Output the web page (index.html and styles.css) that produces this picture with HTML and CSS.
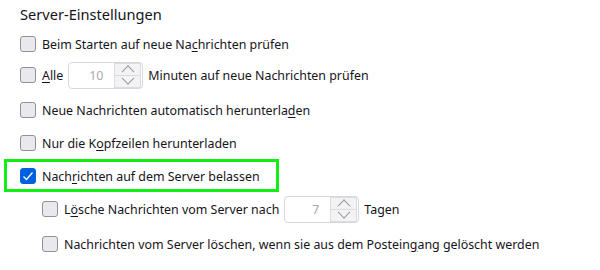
FILE: index.html
```html
<!DOCTYPE html>
<html lang="de">
<head>
    <meta charset="UTF-8">
    <title>Server-Einstellungen</title>
    <link rel="stylesheet" href="styles.css">
</head>
<body>
    <div class="settings">
        <h2>Server-Einstellungen</h2>
        <div class="rows">
            <label class="row">
                <span class="box"></span>
                <span>Beim Starten auf neue Na<u>c</u>hrichten prüfen</span>
            </label>
            <label class="row with-number">
                <span class="box"></span>
                <span><u>A</u>lle</span>
                <span class="number">
                    <span class="value">10</span>
                    <span class="spin">
                        <span class="up"></span>
                        <span class="down"></span>
                    </span>
                </span>
                <span>Minuten auf neue Nachrichten prüfen</span>
            </label>
            <label class="row">
                <span class="box"></span>
                <span>Neue Nachrichten automatisch herunterla<u>d</u>en</span>
            </label>
            <label class="row">
                <span class="box"></span>
                <span>Nur die K<u>o</u>pfzeilen herunterladen</span>
            </label>
            <label class="row focused">
                <span class="box checked">
                    <svg width="12" height="12" viewBox="0 0 12 12"><path d="M1.5 6.5 L4.5 9.5 L10.5 2.5" fill="none" stroke="#fff" stroke-width="1.3"/></svg>
                </span>
                <span>Nach<u>r</u>ichten auf dem Server belassen</span>
            </label>
            <label class="row sub">
                <span class="box"></span>
                <span>L<u>ö</u>sche Nachrichten vom Server nach</span>
                <span class="number">
                    <span class="value">7</span>
                    <span class="spin">
                        <span class="up"></span>
                        <span class="down"></span>
                    </span>
                </span>
                <span>Tagen</span>
            </label>
            <label class="row sub last">
                <span class="box"></span>
                <span>Nachrichten vom Server löschen, wenn sie aus dem Postein<u>g</u>ang gelöscht werden</span>
            </label>
        </div>
    </div>
</body>
</html>
```

FILE: styles.css
```css
body {
    margin: 0;
    background-color: #fff;
    color: #15141a;
    font-family: "Noto Sans", Arial, sans-serif;
    font-size: 12.4px;
}
.settings {
    padding: 4px 0 0 20px;
}
h2 {
    margin: 0;
    height: 26px;
    font-size: 14.6px;
    font-weight: normal;
    line-height: 20px;
}
.rows {
    display: flex;
    flex-direction: column;
    gap: 5px;
}
.row {
    display: flex;
    align-items: center;
    gap: 6px;
    height: 28px;
    white-space: nowrap;
}
.row u {
    text-underline-offset: 2px;
}
.row.with-number {
    margin: -2px 0 2px;
}
.row.sub {
    margin-left: 22px;
}
.row.last {
    margin-top: 2px;
}
.row.focused {
    position: relative;
    align-self: flex-start;
}
.row.focused::after {
    content: "";
    position: absolute;
    top: -3px;
    bottom: -2px;
    left: -16px;
    right: -19px;
    border: 3px solid #11ee11;
}
.box {
    box-sizing: border-box;
    width: 16px;
    height: 16px;
    flex: none;
    border: 1px solid #8f8f9d;
    border-radius: 3px;
    background-color: #e9e9ed;
    display: flex;
    align-items: center;
    justify-content: center;
}
.box.checked {
    background-color: #0061e0;
    border-color: #0061e0;
}
.number {
    box-sizing: border-box;
    display: flex;
    align-items: center;
    width: 75px;
    height: 27px;
    padding: 1px;
    border: 1px solid #d7d7db;
    border-radius: 4px;
    margin: 0 -1px 0 -1px;
}
.number .value {
    flex: 1;
    text-align: right;
    padding-right: 11px;
    color: #a9a9b0;
}
.spin {
    display: flex;
    flex-direction: column;
    width: 27px;
    height: 25px;
    box-sizing: border-box;
    border: 1px solid #dcdce0;
    background-color: #f3f3f5;
}
.spin span {
    flex: 1;
    position: relative;
}
.spin .up {
    border-bottom: 1px solid #dcdce0;
}
.spin span::before {
    content: "";
    position: absolute;
    left: 50%;
    top: 50%;
    width: 8px;
    height: 8px;
    border-left: 1px solid #9a9aa2;
    border-top: 1px solid #9a9aa2;
}
.spin .up::before {
    transform: translate(-50%, -20%) rotate(45deg);
}
.spin .down::before {
    transform: translate(-50%, -80%) rotate(225deg);
}
```
